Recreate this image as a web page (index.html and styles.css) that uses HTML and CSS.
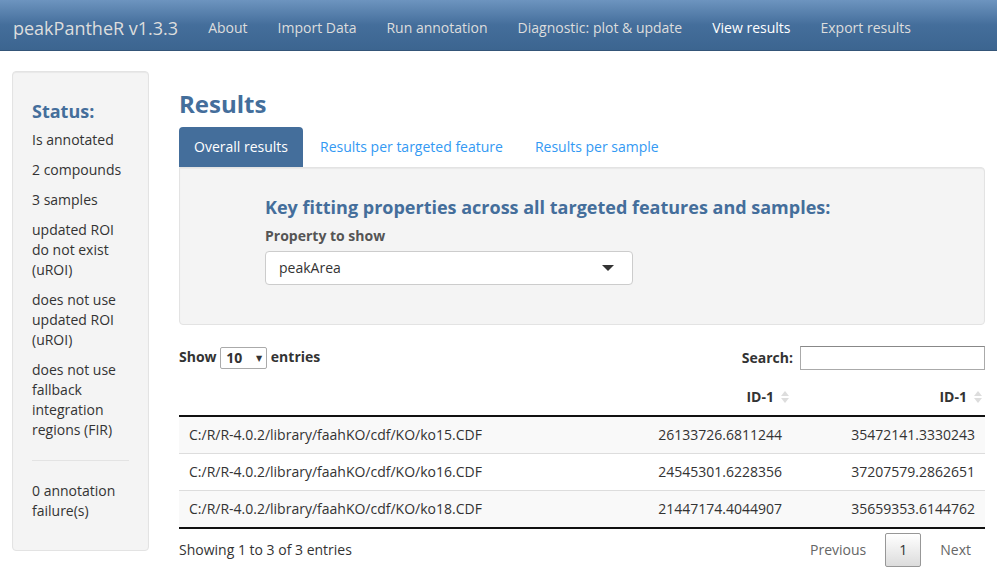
FILE: index.html
```html
<!DOCTYPE html>
<html>
<head>
<meta charset="utf-8">
<link rel="stylesheet" href="styles.css">
</head>
<body>
<nav class="navbar">
  <span class="brand">peakPantheR v1.3.3</span>
  <ul class="nav">
    <li>About</li>
    <li>Import Data</li>
    <li>Run annotation</li>
    <li>Diagnostic: plot &amp; update</li>
    <li class="active">View results</li>
    <li>Export results</li>
  </ul>
</nav>
<div class="page">
  <aside class="well sidebar">
    <h4 class="status-title">Status:</h4>
    <p>Is annotated</p>
    <p>2 compounds</p>
    <p>3 samples</p>
    <p>updated ROI do not exist (uROI)</p>
    <p>does not use updated ROI (uROI)</p>
    <p>does not use fallback integration regions (FIR)</p>
    <hr>
    <p>0 annotation failure(s)</p>
  </aside>
  <main class="main">
    <h2 class="title">Results</h2>
    <ul class="tabs">
      <li class="tab active">Overall results</li>
      <li class="tab">Results per targeted feature</li>
      <li class="tab">Results per sample</li>
    </ul>
    <div class="well tab-well">
      <div class="inner">
        <h4 class="key-title">Key fitting properties across all targeted features and samples:</h4>
        <label class="prop-label">Property to show</label>
        <div class="select">
          <span>peakArea</span>
          <span class="caret"></span>
        </div>
      </div>
    </div>
    <div class="dt-top">
      <div class="length">Show <span class="len-select">10 <span class="small-caret">&#9660;</span></span> entries</div>
      <div class="search">Search: <span class="search-input"></span></div>
    </div>
    <table class="dt">
      <thead>
        <tr>
          <th class="c1"></th>
          <th class="c2 num">ID-1<span class="sort"><i class="up"></i><i class="down"></i></span></th>
          <th class="c3 num">ID-1<span class="sort"><i class="up"></i><i class="down"></i></span></th>
        </tr>
      </thead>
      <tbody>
        <tr class="odd"><td>C:/R/R-4.0.2/library/faahKO/cdf/KO/ko15.CDF</td><td class="num">26133726.6811244</td><td class="num">35472141.3330243</td></tr>
        <tr><td>C:/R/R-4.0.2/library/faahKO/cdf/KO/ko16.CDF</td><td class="num">24545301.6228356</td><td class="num">37207579.2862651</td></tr>
        <tr class="odd"><td>C:/R/R-4.0.2/library/faahKO/cdf/KO/ko18.CDF</td><td class="num">21447174.4044907</td><td class="num">35659353.6144762</td></tr>
      </tbody>
    </table>
    <div class="dt-bottom">
      <div class="info">Showing 1 to 3 of 3 entries</div>
      <div class="paging">
        <span class="pg">Previous</span>
        <span class="pg current">1</span>
        <span class="pg">Next</span>
      </div>
    </div>
  </main>
</div>
</body>
</html>
```
FILE: styles.css
```css
* { box-sizing: border-box; }
html, body { margin: 0; padding: 0; }
body {
  font-family: "Open Sans", "DejaVu Sans", sans-serif;
  font-size: 14px;
  line-height: 20px;
  color: #333;
  background: #fff;
}
.navbar {
  height: 51px;
  background: linear-gradient(to bottom, #6d94bf 0%, #446e9b 50%, #3c6590 100%);
  border-bottom: 1px solid #345578;
  display: flex;
  align-items: center;
  padding: 5px 0 0 13px;
}
.brand {
  font-size: 18px;
  color: #dddddd;
  line-height: 20px;
  padding-right: 15px;
}
.nav {
  list-style: none;
  margin: 0;
  padding: 0;
  display: flex;
}
.nav li {
  padding: 0 15px;
  color: #dddddd;
  line-height: 20px;
}
.nav li.active { color: #fff; }

.page {
  display: flex;
  align-items: flex-start;
  padding: 20px 12px 0 12px;
}
.well {
  background: #f4f4f4;
  border: 1px solid #e3e3e3;
  border-radius: 4px;
  box-shadow: inset 0 1px 1px rgba(0,0,0,0.05);
}
.sidebar {
  width: 137px;
  flex: none;
  padding: 19px;
}
.status-title {
  margin: 10px 0 9px 0;
  font-size: 18px;
  line-height: 20px;
  font-weight: 700;
  color: #446e9b;
}
.sidebar p { margin: 0 0 10px 0; }
.sidebar hr {
  border: 0;
  border-top: 1px solid #e3e3e3;
  margin: 20px 0;
}
.main {
  flex: 1;
  margin-left: 30px;
}
.title {
  margin: 20px 0 0 0;
  font-size: 24px;
  line-height: 26px;
  font-weight: 700;
  color: #446e9b;
  height: 36px;
}
.tabs {
  list-style: none;
  margin: 0;
  padding: 0;
  display: flex;
}
.tab {
  padding: 10px 15px;
  margin-right: 2px;
  color: #3399f3;
  border-radius: 4px 4px 0 0;
}
.tab.active {
  background: #446e9b;
  color: #fff;
}
.tab-well {
  border-top-left-radius: 0;
  padding: 19px 19px 19px 85px;
  height: 158px;
}
.key-title {
  margin: 10px 0 9px 0;
  font-size: 18px;
  line-height: 20px;
  font-weight: 700;
  color: #446e9b;
}
.prop-label {
  display: block;
  font-weight: 700;
  color: #555;
  margin-bottom: 5px;
}
.select {
  width: 368px;
  height: 34px;
  background: #fff;
  border: 1px solid #ccc;
  border-radius: 4px;
  display: flex;
  align-items: center;
  justify-content: space-between;
  padding: 0 18px 0 13px;
  color: #333;
}
.caret {
  width: 0;
  height: 0;
  border-left: 6px solid transparent;
  border-right: 6px solid transparent;
  border-top: 6px solid #333;
}
.dt-top {
  display: flex;
  justify-content: space-between;
  align-items: center;
  margin-top: 21px;
  height: 24px;
  font-weight: 700;
}
.len-select {
  display: inline-flex;
  align-items: center;
  justify-content: space-between;
  width: 47px;
  height: 22px;
  border: 1px solid #aaa;
  border-radius: 2px;
  padding: 0 4px 0 5px;
  margin: 0;
  vertical-align: middle;
  font-weight: 700;
  background: #fff;
}
.small-caret { font-size: 8px; color: #333; }
.search { display: flex; align-items: center; }
.search-input {
  display: inline-block;
  width: 185px;
  height: 24px;
  margin-left: 7px;
  border: 1px solid #aaa;
  border-top-color: #888;
  background: #fff;
}
.dt {
  width: 100%;
  border-collapse: collapse;
  margin-top: 6px;
}
.dt th {
  padding: 11px 18px 8px 10px;
  font-weight: 700;
  border-bottom: 2px solid #111;
  line-height: 20px;
}
.dt td {
  padding: 8px 10px;
  border-top: 1px solid #ddd;
  line-height: 20px;
}
.dt tbody tr:first-child td { border-top: 0; }
.dt tbody tr:last-child td { border-bottom: 2px solid #111; }
.dt tr.odd td { background: #f9f9f9; }
.num { text-align: right; }
.c2 { width: 200px; }
.c3 { width: 193px; }
.dt th.num { position: relative; }
.sort {
  position: absolute;
  right: 3px;
  top: 15px;
  display: flex;
  flex-direction: column;
  gap: 2px;
}
.sort i {
  display: block;
  width: 0; height: 0;
  border-left: 4px solid transparent;
  border-right: 4px solid transparent;
}
.sort .up { border-bottom: 5px solid #ddd; }
.sort .down { border-top: 5px solid #ddd; }
.dt-bottom {
  display: flex;
  justify-content: space-between;
  align-items: center;
  margin-top: 4px;
}
.info { color: #333; }
.paging { display: flex; align-items: center; }
.pg {
  padding: 6px 13px;
  color: #666;
  border: 1px solid transparent;
  border-radius: 2px;
  line-height: 20px;
}
.pg.current {
  color: #333;
  border: 1px solid #979797;
  background: linear-gradient(to bottom, #fff 0%, #dcdcdc 100%);
  padding: 6px 13px;
  margin: 0 5px;
}
```
